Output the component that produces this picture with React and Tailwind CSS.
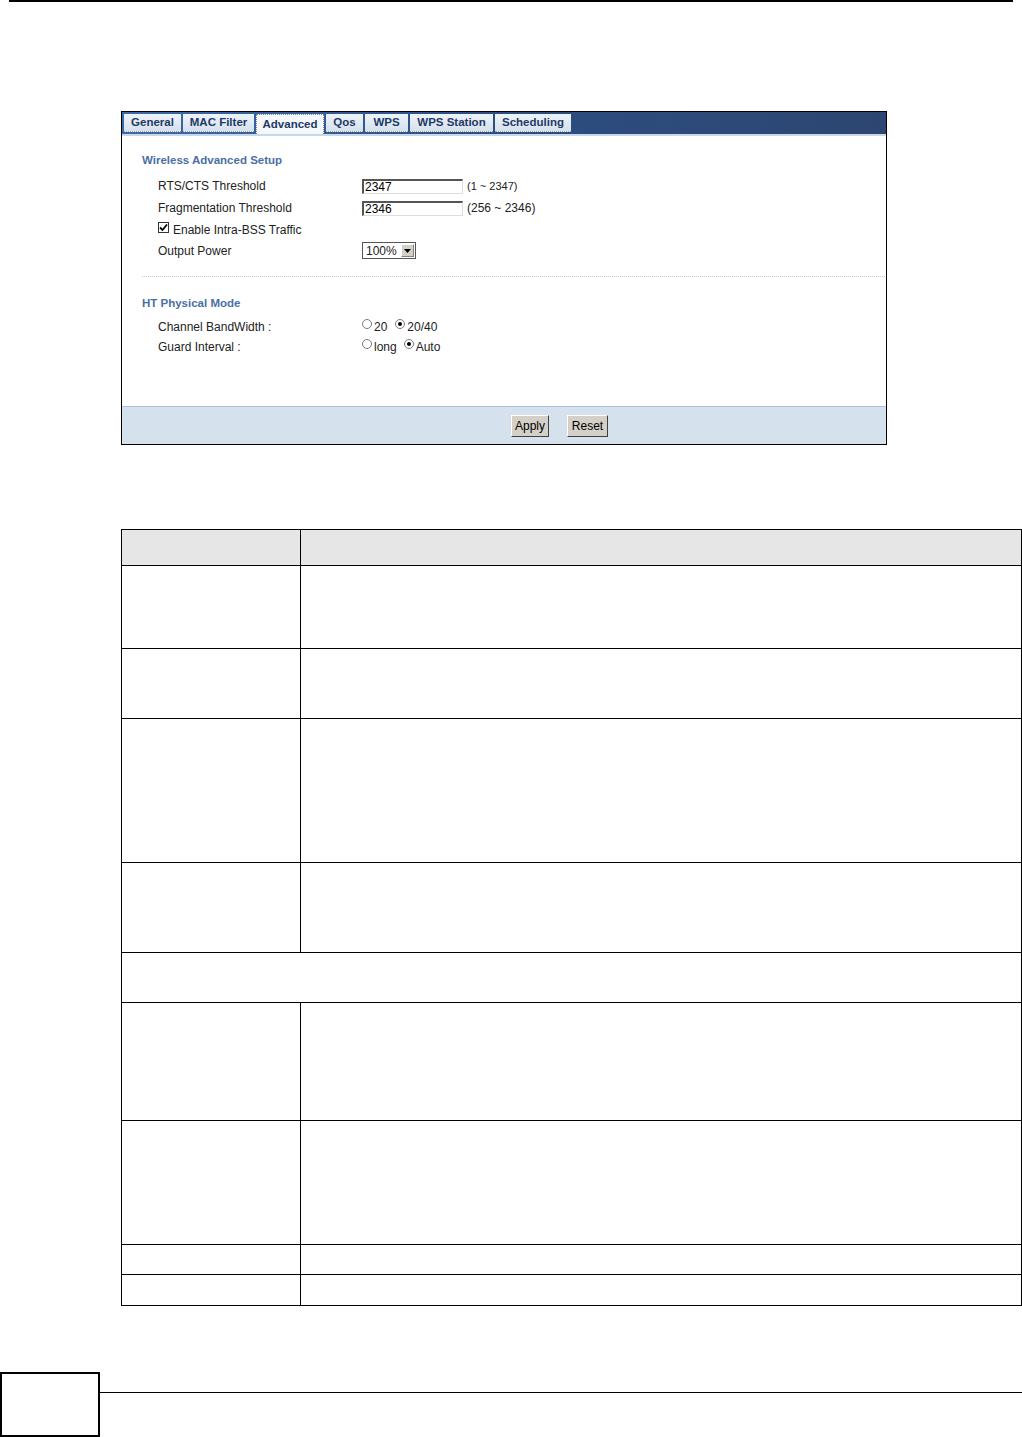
import React from "react";

const tabs = [
  { name: "General", w: "w-[57px]" },
  { name: "MAC Filter", w: "w-[71px]" },
  { name: "Advanced", w: "w-[68px]", active: true },
  { name: "Qos", w: "w-[37px]" },
  { name: "WPS", w: "w-[43px]" },
  { name: "WPS Station", w: "w-[83px]" },
  { name: "Scheduling", w: "w-[76px]" },
];

const rows = [
  { h: "h-[83px]" },
  { h: "h-[70px]" },
  { h: "h-[144px]" },
  { h: "h-[90px]" },
  { h: "h-[50px]", span: true },
  { h: "h-[118px]" },
  { h: "h-[124px]" },
  { h: "h-[30px]" },
  { h: "h-[30px]" },
];

function Radio({ checked }) {
  return (
    <span className="relative -top-[3px] inline-block w-[10px] h-[10px] rounded-full border border-[#7a7a7a] bg-white mr-[2px]">
      {checked && (
        <span className="absolute left-[2px] top-[2px] w-[4px] h-[4px] rounded-full bg-black" />
      )}
    </span>
  );
}

function TextBox({ value }) {
  return (
    <div className="w-[101px] h-[15px] border-t-2 border-l-2 border-t-[#555] border-l-[#555] border-r border-b border-r-[#ddd] border-b-[#ddd] bg-white text-[12px] leading-[12px] pl-[1px] text-black">
      {value}
    </div>
  );
}

function Panel() {
  return (
    <div className="ml-[121px] w-[766px] border border-black font-['Liberation_Sans',Arial,sans-serif] text-[12px] text-[#222]">
      {/* tab bar */}
      <div className="h-[22px] flex items-start gap-[2px] pl-[2px] pt-[2px] bg-gradient-to-r from-[#3d6aa5] via-[#2c4e82] to-[#2d4671]">
        {tabs.map((t) => (
          <div
            key={t.name}
            className={
              t.active
                ? `${t.w} h-[20px] flex items-center justify-center bg-[#f4f7fb] border border-dotted border-[#888] border-b-0 text-[11.5px] text-[#1d3a66] font-bold`
                : `${t.w} h-[18px] flex items-center justify-center bg-gradient-to-b from-[#eef3f9] to-[#d6e1ee] border-b border-dotted border-[#9aa] text-[11.5px] text-[#1d3a66] font-bold`
            }
          >
            {t.name}
          </div>
        ))}
      </div>
      <div className="h-[2px] bg-[#c9d7e8]" />

      {/* content */}
      <div className="h-[270px] bg-white pt-[17px]">
        <div className="pl-[20px] h-[14px] leading-[14px] text-[11.5px] text-[#4a6fa5] font-bold">
          Wireless Advanced Setup
        </div>
        <div className="mt-[8px] pl-[36px]">
          <div className="h-[22px] flex items-center">
            <div className="w-[204px]">RTS/CTS Threshold</div>
            <TextBox value="2347" />
            <span className="ml-[4px] text-[11px]">(1 ~ 2347)</span>
          </div>
          <div className="h-[22px] flex items-center">
            <div className="w-[204px]">Fragmentation Threshold</div>
            <TextBox value="2346" />
            <span className="ml-[4px] text-[12px]">(256 ~ 2346)</span>
          </div>
          <div className="h-[21px] flex items-center">
            <span className="relative -top-[2px] w-[11px] h-[11px] border border-[#333] bg-white flex items-center justify-center mr-[4px]">
              <svg width="9" height="9" viewBox="0 0 9 9">
                <path d="M1 4.5 L3.5 7 L8 1.5" stroke="#000" strokeWidth="1.8" fill="none" />
              </svg>
            </span>
            Enable Intra-BSS Traffic
          </div>
          <div className="h-[21px] flex items-center">
            <div className="w-[204px]">Output Power</div>
            <div className="h-[17px] w-[54px] border border-[#555] bg-white flex items-center">
              <span className="flex-1 pl-[3px] text-[12px] leading-[12px]">100%</span>
              <span className="w-[13px] h-[13px] mr-[1px] bg-[#d4d0c8] border border-t-white border-l-white border-r-[#808080] border-b-[#808080] flex items-center justify-center">
                <svg width="7" height="4" viewBox="0 0 7 4">
                  <path d="M0 0 H7 L3.5 4 Z" fill="#000" />
                </svg>
              </span>
            </div>
          </div>
        </div>

        <div className="mt-[15px] ml-[20px] mr-[1px] border-t border-dotted border-[#c8c8c8]" />

        <div className="mt-[19px] pl-[20px] h-[14px] leading-[14px] text-[11.5px] text-[#4a6fa5] font-bold">
          HT Physical Mode
        </div>
        <div className="mt-[7px] pl-[36px]">
          <div className="h-[20px] flex items-center">
            <div className="w-[204px]">Channel BandWidth :</div>
            <span className="flex items-center">
              <Radio /> 20
              <span className="w-[8px]" />
              <Radio checked /> 20/40
            </span>
          </div>
          <div className="h-[20px] flex items-center">
            <div className="w-[204px]">Guard Interval :</div>
            <span className="flex items-center">
              <Radio /> long
              <span className="w-[7px]" />
              <Radio checked /> Auto
            </span>
          </div>
        </div>
      </div>

      {/* footer */}
      <div className="h-[38px] bg-[#d6e1ee] border-t border-[#a9c1dd] flex items-center pl-[389px] gap-[18px]">
        <button className="h-[22px] w-[38px] bg-[#d4d0c8] border border-t-white border-l-white border-r-[#404040] border-b-[#404040] text-[12px] text-black">
          Apply
        </button>
        <button className="h-[22px] w-[41px] bg-[#d4d0c8] border border-t-white border-l-white border-r-[#404040] border-b-[#404040] text-[12px] text-black">
          Reset
        </button>
      </div>
    </div>
  );
}

function Table() {
  return (
    <div className="ml-[121px] w-[901px] border border-black">
      <div className="h-[36px] flex bg-[#e6e6e6] border-b border-black">
        <div className="w-[179px] border-r border-black" />
        <div className="flex-1" />
      </div>
      {rows.map((r, i) => (
        <div
          key={i}
          className={`${r.h} flex ${i < rows.length - 1 ? "border-b border-black" : ""}`}
        >
          {r.span ? (
            <div className="flex-1" />
          ) : (
            <>
              <div className="w-[179px] border-r border-black" />
              <div className="flex-1" />
            </>
          )}
        </div>
      ))}
    </div>
  );
}

export default function App() {
  return (
    <div className="w-[1022px] h-[1437px] bg-white flex flex-col overflow-hidden">
      <div className="shrink-0 mx-[9px] h-[2px] bg-black" />
      <div className="shrink-0 mt-[109px]">
        <Panel />
      </div>
      <div className="shrink-0 mt-[84px]">
        <Table />
      </div>
      <div className="shrink-0 mt-[66px] flex items-start">
        <div className="w-[100px] h-[65px] border-2 border-black" />
        <div className="flex-1 mt-[20px] h-[1px] bg-black" />
      </div>
    </div>
  );
}
